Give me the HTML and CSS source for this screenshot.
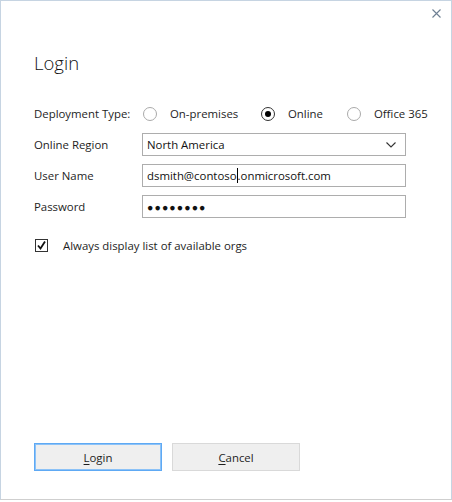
FILE: index.html
```html
<!DOCTYPE html>
<html>
<head>
<meta charset="utf-8">
<link rel="stylesheet" href="styles.css">
</head>
<body>
<div class="window">
  <div class="titlebar">
    <svg class="close" width="9" height="9" viewBox="0 0 9 9"><path d="M0.5 0.5 L8.5 8.5 M8.5 0.5 L0.5 8.5" stroke="#6d7f93" stroke-width="1.1" fill="none"/></svg>
  </div>
  <div class="content">
    <h1 class="title">Login</h1>
    <div class="form">
      <div class="label">Deployment Type:</div>
      <div class="radios">
        <label class="radio"><span class="circle"></span><span class="rtext">On-premises</span></label>
        <label class="radio"><span class="circle on"><span class="dot"></span></span><span class="rtext">Online</span></label>
        <label class="radio"><span class="circle"></span><span class="rtext">Office 365</span></label>
      </div>
      <div class="label">Online Region</div>
      <div class="field select"><span>North America</span>
        <svg width="10" height="6" viewBox="0 0 10 6"><path d="M0.5 0.5 L5 5 L9.5 0.5" stroke="#333" stroke-width="1.1" fill="none"/></svg>
      </div>
      <div class="label">User Name</div>
      <div class="field"><span>dsmith@contoso</span><span class="caret"></span><span>.onmicrosoft.com</span></div>
      <div class="label">Password</div>
      <div class="field"><span class="dots">●●●●●●●●</span></div>
    </div>
    <label class="check">
      <span class="box"><svg width="11" height="11" viewBox="0 0 11 11"><path d="M2 5.5 L4.5 8.5 L9 1.5" stroke="#111" stroke-width="1.8" fill="none"/></svg></span>
      <span>Always display list of available orgs</span>
    </label>
    <div class="buttons">
      <button class="btn primary"><u>L</u>ogin</button>
      <button class="btn"><u>C</u>ancel</button>
    </div>
  </div>
</div>
</body>
</html>
```

FILE: styles.css
```css
html, body {
  margin: 0;
  background: #ffffff;
}
body {
  font-family: "Open Sans", "Noto Sans", sans-serif;
  font-size: 11.4px;
  color: #1e1e1e;
}
.window {
  box-sizing: border-box;
  width: 452px;
  height: 500px;
  border: 1px solid #c6d4e2;
  border-bottom-color: #cfcfcf;
  display: flex;
  flex-direction: column;
}
.titlebar {
  height: 30px;
  display: flex;
  justify-content: flex-end;
  align-items: flex-start;
  padding-right: 10px;
}
.close {
  margin-top: 8px;
}
.content {
  flex: 1;
  display: flex;
  flex-direction: column;
  padding: 0 0 28px 33px;
}
.title {
  margin: 18px 0 0 0;
  font-size: 18.5px;
  font-weight: 300;
  line-height: 28px;
  color: #111;
}
.form {
  margin-top: 25px;
  display: grid;
  grid-template-columns: 108px 264px;
  grid-auto-rows: 23px;
  row-gap: 8px;
  align-items: center;
}
.label {
  line-height: 23px;
}
.radios {
  display: flex;
  align-items: center;
  margin-left: 1px;
  white-space: nowrap;
}
.radio {
  display: flex;
  align-items: center;
  flex: none;
}
.radio:nth-child(1) { width: 118px; }
.radio:nth-child(2) { width: 86px; }
.circle {
  box-sizing: border-box;
  width: 14px;
  height: 14px;
  border: 1px solid #aaaaaa;
  border-radius: 50%;
  display: flex;
  align-items: center;
  justify-content: center;
  margin-right: 13px;
}
.circle.on { border-color: #333; }
.dot {
  width: 6px;
  height: 6px;
  border-radius: 50%;
  background: #000;
}
.field {
  box-sizing: border-box;
  height: 23px;
  border: 1px solid #adadad;
  display: flex;
  align-items: center;
  padding-left: 4px;
  color: #111;
}
.select {
  justify-content: space-between;
  padding-right: 9px;
}
.caret {
  display: inline-block;
  width: 1px;
  height: 15px;
  background: #000;
}
.dots {
  font-size: 10.5px;
  letter-spacing: 1.1px;
}
.check {
  margin-top: 20px;
  display: flex;
  align-items: center;
  margin-left: 1px;
}
.box {
  box-sizing: border-box;
  width: 13px;
  height: 13px;
  border: 1px solid #333;
  display: flex;
  align-items: center;
  justify-content: center;
  margin-right: 15px;
}
.buttons {
  margin-top: auto;
  display: flex;
  gap: 10px;
}
.btn {
  box-sizing: border-box;
  width: 128px;
  height: 28px;
  background: #efefef;
  border: 1px solid #d9d9d9;
  font-family: inherit;
  font-size: 11.4px;
  color: #1e1e1e;
  padding: 0;
  margin: 0;
}
.btn.primary {
  border: 1px solid #5ea9f4;
  box-shadow: inset 0 0 0 1px #8cc2f7;
}
.btn u {
  text-underline-offset: 2px;
}
```
